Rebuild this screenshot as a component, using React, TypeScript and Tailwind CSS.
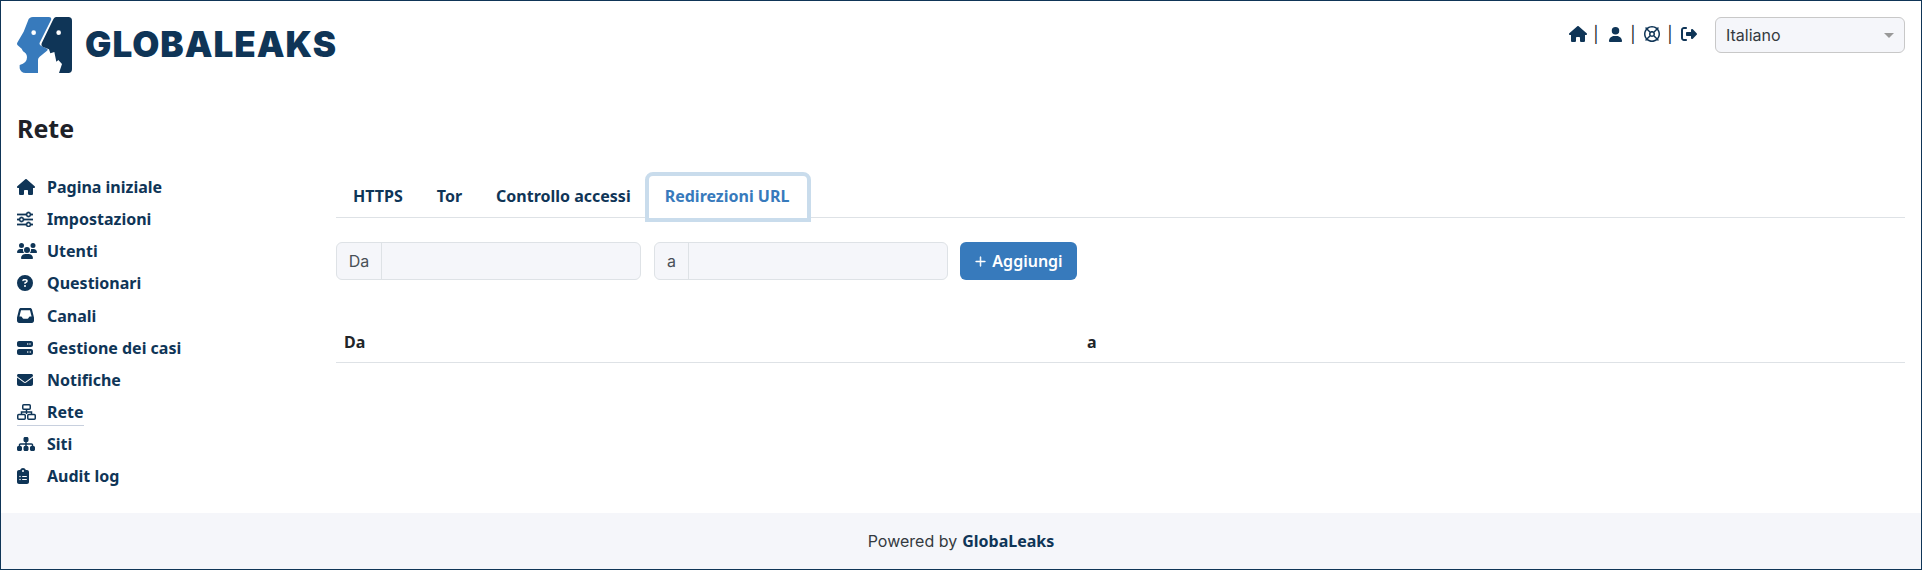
import { ReactNode } from 'react'
import { FaHouse, FaUser, FaRegLifeRing, FaRightFromBracket, FaUsers, FaCircleQuestion, FaInbox, FaServer, FaEnvelope, FaSitemap, FaClipboardList } from 'react-icons/fa6'
import { BsSliders, BsPlusLg } from 'react-icons/bs'

function NetworkIcon() {
  return (
    <svg width="19" height="16" viewBox="0 0 19 16" fill="none" stroke="currentColor" strokeWidth="1.5">
      <rect x="5.750" y="0.750" width="7.500" height="4.500" rx="1" />
      <path d="M9.500 5.500V10M4.500 10.500V8H14.500V10.500" />
      <rect x="0.750" y="10.500" width="7.500" height="4.750" rx="1" />
      <rect x="10.750" y="10.500" width="7.500" height="4.750" rx="1" />
    </svg>
  )
}

const navItems: { label: string; icon: ReactNode; active?: boolean }[] = [
  { label: 'Pagina iniziale', icon: <FaHouse size={18} /> },
  { label: 'Impostazioni', icon: <BsSliders size={16} stroke="currentColor" strokeWidth={0.8} /> },
  { label: 'Utenti', icon: <FaUsers size={20} /> },
  { label: 'Questionari', icon: <FaCircleQuestion size={16} /> },
  { label: 'Canali', icon: <FaInbox size={17} /> },
  { label: 'Gestione dei casi', icon: <FaServer size={16} /> },
  { label: 'Notifiche', icon: <FaEnvelope size={16} /> },
  { label: 'Rete', icon: <NetworkIcon />, active: true },
  { label: 'Siti', icon: <FaSitemap size={18} /> },
  { label: 'Audit log', icon: <FaClipboardList size={16} className="-ml-[2px]" /> },
]

function Logo() {
  return (
    <svg width="55" height="56" viewBox="22 21 165 168" className="shrink-0">
      <path
        fill="#377abc"
        d="M70 21H118Q127 21 124 30L90 98Q88 104 94 107L112 116Q116 119 112 122L90 140Q85 144 85 150V189H48Q33 189 30 175V165Q52 160 52 142Q52 130 40 124L36 116L24 106Q20 102 24 96L42 65L55 32Q58 21 70 21Z"
      />
      <circle cx="72" cy="68" r="7" fill="#fff" />
      <path
        fill="#0f3557"
        d="M140 21H176Q187 21 187 32V178Q187 189 176 189H148L157 162L146 150L140 155L134 126L122 130L118 118L99 110Q93 107 96 100L128 34Q133 21 140 21Z"
      />
      <circle cx="147" cy="68" r="7" fill="#fff" />
    </svg>
  )
}

function Divider({ className }: { className: string }) {
  return <span className={`${className} text-center text-[16px] leading-6 text-[#212529]`}>|</span>
}

export default function App() {
  return (
    <div className="h-[570px] flex flex-col border border-[#0f3557] bg-white overflow-hidden font-['Inter',sans-serif]">
      {/* Header */}
      <header className="h-[103px] shrink-0 flex justify-between px-4 pt-4">
        <div className="flex items-start gap-[13px]">
          <Logo />
          <span className="mt-[8px] text-[35px] leading-[38px] font-black tracking-[1px] text-[#0f3557]">GLOBALEAKS</span>
        </div>
        <div className="flex items-start">
          <div className="flex items-center h-[24px] mt-[5px] mr-[14px] text-[#0f3557]">
            <span className="w-[18px] flex justify-center"><FaHouse size={18} /></span>
            <Divider className="w-[18px]" />
            <span className="w-[20px] flex justify-center"><FaUser size={15} /></span>
            <Divider className="w-[16px]" />
            <span className="w-[22px] flex justify-center"><FaRegLifeRing size={16} /></span>
            <Divider className="w-[14px]" />
            <span className="w-[24px] flex justify-center"><FaRightFromBracket size={16} /></span>
          </div>
          <div className="w-[190px] h-[36px] flex items-center justify-between px-[10px] bg-[#f5f6fa] border border-[#c8c8c8] rounded-md">
            <span className="text-[16px] text-[#343a40]">Italiano</span>
            <span className="w-0 h-0 border-x-[5px] border-x-transparent border-t-[5px] border-t-[#999]" />
          </div>
        </div>
      </header>

      <div className="flex-1 flex px-4">
        {/* Sidebar */}
        <aside className="w-[319px] shrink-0 font-['Noto_Sans',sans-serif]">
          <h1 className="text-[25px] leading-[36px] font-bold text-[#1e2128] mt-[6px] mb-[25px]">Rete</h1>
          <nav className="flex flex-col">
            {navItems.map((item) => (
              <div key={item.label} className="h-[32.15px] flex items-center text-[#0f3557]">
                <span className={`flex items-center ${item.active ? 'border-b border-[#c8d0de] h-[28px]' : ''}`}>
                  <span className="w-[30px] flex items-center">{item.icon}</span>
                  <span className="text-[16px] leading-6 font-bold">{item.label}</span>
                </span>
              </div>
            ))}
          </nav>
        </aside>

        {/* Main */}
        <main className="flex-1 pt-[68px]">
          <div className="h-[46px] flex items-end border-b border-[#dee2e6] font-['Noto_Sans',sans-serif] text-[16px] font-bold text-[#0f3557]">
            <span className="px-[17px] h-[40px] leading-[39px]">HTTPS</span>
            <span className="px-[17px] h-[40px] leading-[39px]">Tor</span>
            <span className="px-[17px] h-[40px] leading-[39px]">Controllo accessi</span>
            <span className="-ml-[3px] pl-4 pr-[18px] h-[50px] -mb-[5px] leading-[41px] text-[#377abc] bg-white border-4 border-[#c9dcec] rounded-t-lg">Redirezioni URL</span>
          </div>

          <div className="flex gap-3 mt-[24px] h-[38px]">
            <div className="w-[305px] flex bg-[#f5f6fa] border border-[#dee2e6] rounded-md">
              <span className="w-[45px] flex items-center justify-center border-r border-[#dee2e6] text-[16px] text-[#495057]">Da</span>
            </div>
            <div className="ml-px w-[294px] flex bg-[#f5f6fa] border border-[#dee2e6] rounded-md">
              <span className="w-[34px] flex items-center justify-center border-r border-[#dee2e6] text-[16px] text-[#495057]">a</span>
            </div>
            <button className="w-[117px] flex items-center justify-center gap-[5px] bg-[#377abc] rounded-md text-white font-['Noto_Sans',sans-serif] text-[16px] font-semibold">
              <BsPlusLg size={13} stroke="currentColor" strokeWidth={0.8} />
              Aggiungi
            </button>
          </div>

          <div className="mt-[44px] h-[39px] pb-[2px] flex items-center border-b border-[#dee2e6] font-['Noto_Sans',sans-serif] text-[16px] font-bold text-[#212529]">
            <span className="w-[743px] pl-2">Da</span>
            <span className="pl-2">a</span>
          </div>
        </main>
      </div>

      {/* Footer */}
      <footer className="h-[56px] shrink-0 flex items-center justify-center gap-[5px] bg-[#f5f6fa] text-[16px] text-[#343a40]">
        Powered by
        <span className="font-['Noto_Sans',sans-serif] font-bold text-[#0f3557]">GlobaLeaks</span>
      </footer>
    </div>
  )
}
